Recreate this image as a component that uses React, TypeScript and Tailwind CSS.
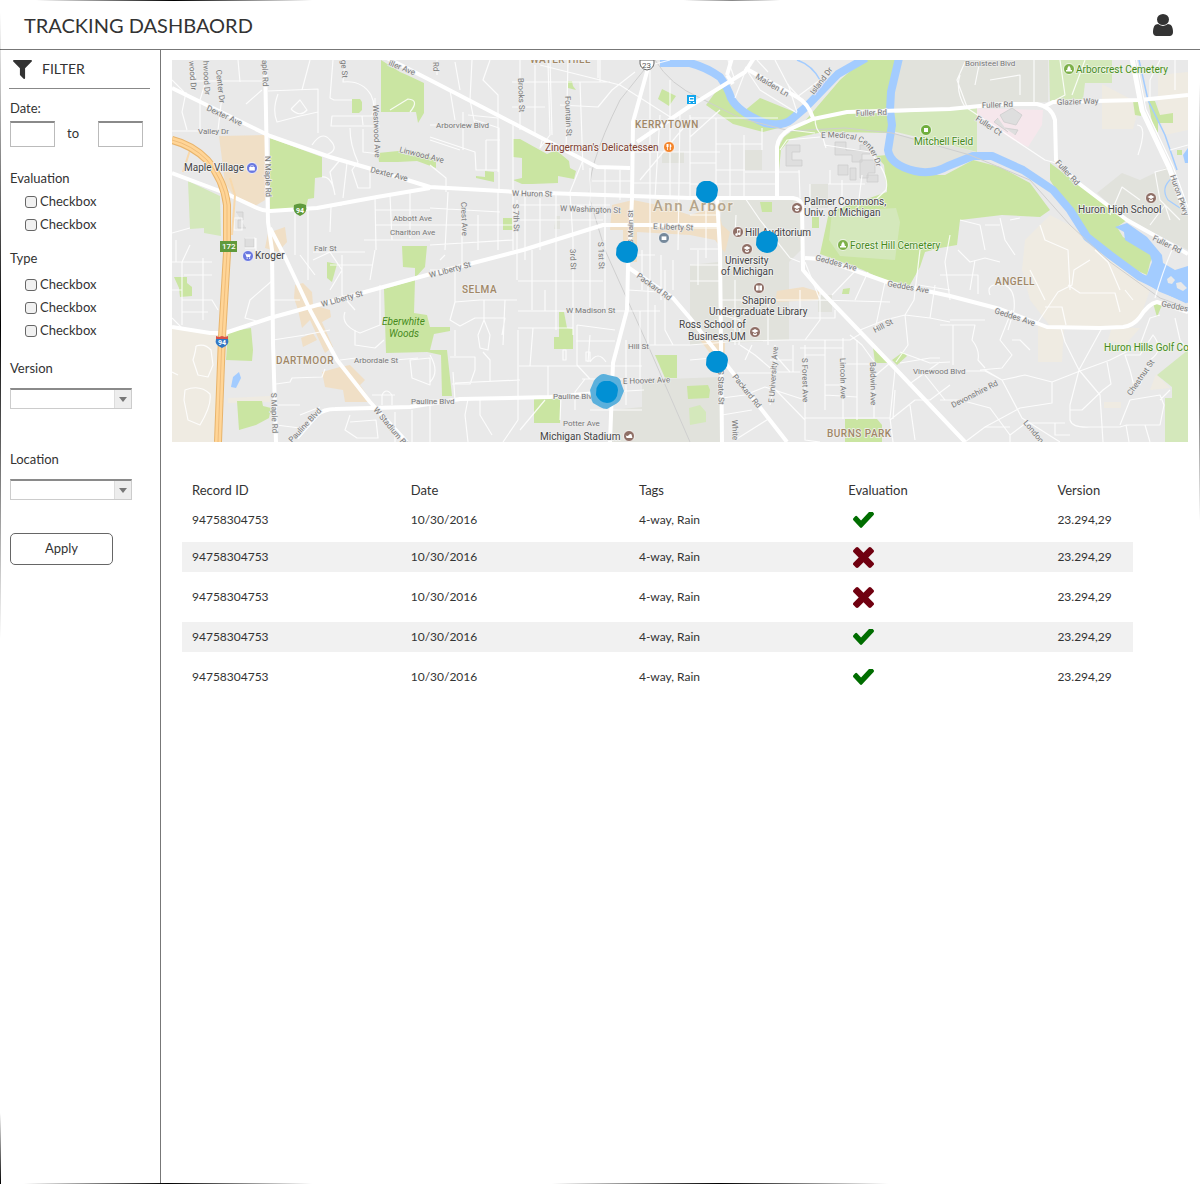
import type { ReactNode } from 'react';

const USER_PATH =
  'M1536 1399q0 109-62.5 187t-150.5 78h-854q-88 0-150.5-78t-62.5-187q0-85 8.5-160.5t31.5-152 58.5-131 94-89 134.5-34.5q131 128 313 128t313-128q76 0 134.5 34.5t94 89 58.5 131 31.5 152 8.5 160.5zm-256-887q0 159-112.5 271.5t-271.5 112.5-271.5-112.5-112.5-271.5 112.5-271.5 271.5-112.5 271.5 112.5 112.5 271.5z';
const FILTER_PATH =
  'M1595 295q17 41-14 70l-493 493v742q0 42-39 59-13 5-25 5-27 0-45-19l-256-256q-19-19-19-45v-486l-493-493q-31-29-14-70 17-39 59-39h1280q42 0 59 39z';
const CHECK_PATH =
  'M1671 566q0 40-28 68l-724 724-136 136q-28 28-68 28t-68-28l-136-136-362-362q-28-28-28-68t28-68l136-136q28-28 68-28t68 28l294 295 656-657q28-28 68-28t68 28l136 136q28 28 28 68z';
const CROSS_PATH =
  'M1490 1322q0 40-28 68l-136 136q-28 28-68 28t-68-28l-294-294-294 294q-28 28-68 28t-68-28l-136-136q-28-28-28-68t28-68l294-294-294-294q-28-28-28-68t28-68l136-136q28-28 68-28t68 28l294 294 294-294q28-28 68-28t68 28l136 136q28 28 28 68t-28 68l-294 294 294 294q28 28 28 68z';

/* ---------- map data ---------- */

const BEIGE = [
  '172,328 220,335 216,442 172,442',
  '1025,240 1050,215 1075,228 1118,262 1150,290 1140,318 1122,327 1050,326 1030,300 1022,270',
  '1102,84 1140,104 1133,129 1102,129',
  '1158,75 1188,72 1188,130 1165,135 1158,110',
  '1038,325 1064,328 1062,362 1038,362',
  '1104,402 1121,402 1121,408 1104,408',
  '1156,374 1170,388 1150,390',
  '228,398 270,396 270,402 228,403',
  '1112,327 1140,328 1125,345 1108,340',
];

const GREY = [
  '722,200 801,200 801,250 789,262 789,340 690,345 690,265 718,262',
  '900,60 1048,60 1048,102 892,111',
  '890,133 950,145 975,152 925,173 893,160',
  '1097,193 1122,173 1140,180 1167,167 1188,213 1188,250 1127,220',
  '642,380 720,377 720,442 612,442 612,410 642,407',
  '745,150 762,150 762,170 745,170',
  '810,184 828,184 828,208 810,208',
  '556,216 560,216 560,229 554,229',
  '662,152 684,152 684,163 662,163',
  '818,295 832,295 832,312 818,312',
];

const GREEN = [
  '270,138 322,157 322,177 315,178 314,198 308,199 306,207 270,210',
  '381,60 400,72 407,75 424,83 424,113 418,123 416,112 381,112',
  '352,99 360,99 362,102 362,110 359,113 352,113',
  '378,153 398,151 417,151 436,160 436,168 417,161 398,162 379,162',
  '402,246 427,246 425,267 415,278 415,268 403,267',
  '384,289 415,280 414,313 427,315 430,327 450,327 450,331 434,334 430,350 447,350 452,396 442,396 441,355 427,352 386,353',
  '174,277 187,277 187,283 192,287 192,296 180,297 179,288',
  '228,332 251,328 253,350 252,361 226,360',
  '237,401 262,401 263,406 271,408 269,418 256,425 239,430',
  '327,262 337,264 332,282 327,278',
  '513,139 520,139 547,154 556,150 569,161 570,168 576,171 574,179 558,176 558,183 532,184 522,184 513,180 522,178 522,158 513,157',
  '485,171 494,172 494,182 476,178 476,176 485,177',
  '503,218 512,218 513,230 503,230',
  '568,81 572,81 573,86 576,90 568,88',
  '662,89 676,96 669,106 658,99',
  '559,312 564,312 567,328 573,329 573,349 554,349 554,337 559,337',
  '534,398 560,398 560,423 534,423',
  '655,355 677,355 677,378 665,378',
  '687,386 708,385 710,390 709,398 688,399',
  '873,347 892,363 875,363',
  '892,360 903,352 907,356 897,365',
  '845,419 877,419 882,425 882,442 845,442',
  '829,212 887,192 884,165 876,156 887,155 893,165 923,175 945,175 973,160 1000,167 1030,183 1050,210 1040,217 1002,215 960,220 957,245 940,248 925,252 920,267 907,290 890,283 863,270 820,254',
  '863,60 898,60 890,115 892,133 836,132 818,133 790,139 781,150 779,170 777,150 784,137 805,121 840,80',
  '706,105 723,82 733,102 743,112 760,98 797,113 790,125 763,132 733,124',
  '760,202 772,202 772,212 762,212',
  '812,217 819,217 819,228 812,228',
  '1148,100 1155,101 1160,115 1173,113 1173,123 1158,123 1158,133 1152,122',
  '1133,101 1140,101 1141,116 1135,115',
  '1050,163 1127,220 1117,227 1123,237 1153,255 1150,263 1147,275 1110,258 1083,233 1050,180',
  '1153,303 1162,305 1157,317',
  '843,289 850,288 849,294 842,294',
  '1177,150 1182,150 1182,155 1177,155',
];

const LIGHT_GREEN = [
  '188,181 220,196 221,236 204,233 204,228 190,229',
  '893,113 977,108 977,152 950,145 892,131',
  '1049,60 1112,60 1112,83 1085,83 1083,100 1050,102',
  '1188,350 1157,375 1172,387 1172,398 1165,398 1165,442 1188,442',
  '832,212 896,208 900,222 895,260 840,256 829,240',
  '689,408 700,405 706,412 706,422 690,425',
];

const TAN = [
  '219,136 265,135 265,200 255,206 235,198 225,183',
  '295,285 303,283 312,292 313,305 330,310 331,317 322,322 333,347 325,353 310,320 302,328 298,310 294,298',
  '301,338 313,333 317,340 303,347',
  '322,372 340,367 350,365 365,380 360,385 372,402 345,402 343,390 325,387',
  '268,233 285,227 287,242 278,252 265,248',
  '612,205 633,200 658,205 690,215 718,207 722,225 730,232 725,253 715,240 690,235 637,232 637,262 623,262 623,230 610,230',
  '777,291 803,287 820,292 818,300 775,302',
  '700,340 725,342 725,358 712,356',
];

const WATER_LINES = [
  'M660 63L690 63Q706 67 720 77Q728 88 731 98Q738 112 765 123Q783 127 792 119L806 107L838 74L866 58',
  'M899 58L891 92L890 110L892 125L888 150Q890 165 915 171Q932 175 948 166L973 156H992L1023 170L1053 190L1070 210L1087 237L1110 255L1140 277L1188 300',
];

const LAKES = [
  '1115,227 1127,223 1147,237 1162,255 1163,263 1175,270 1188,266 1188,303 1160,292 1140,280 1147,275 1152,262 1150,255 1125,240 1124,232',
  '239,372 241,378 236,388 231,387 233,377',
  '1188,148 1183,155 1185,163 1188,163',
];

const MINOR = [
  'M172 131H217M186 92L182 112L187 130M205 84L200 100V130M222 96L218 130M192 60V81H262M238 60L240 82M262 90L246 104M196 81L192 60M172 80L184 92',
  'M268 91L318 89V133M278 94Q272 110 277 122L300 116L318 112M291 109L300 100L307 110Q300 118 291 109M302 90L310 60',
  'M333 60L330 98L334 100H352M345 60L343 82Q362 80 371 95Q376 105 372 116H332L331 126H380M362 116L363 125',
  'M375 98V150M390 110L408 99Q420 100 410 112M350 128Q350 145 358 162L352 170L358 188H370V170M312 145Q322 130 330 140Q340 150 326 155M363 129V152L380 154',
  'M340 160L330 172L335 195M347 163L343 198M322 177Q332 176 335 195M295 211V255M308 209V280M331 207L330 232M317 208L342 205M375 197L376 250M390 195L392 240M410 193V238M375 210H430M375 225H430M364 240H430M313 252H365',
  'M172 233L190 228M176 240V262M190 245L182 262V325M172 262H212M184 275H212M172 290H182M182 300H212L218 310M182 312H208M203 258V320M172 318L182 328M226 230L230 255',
  'M234 218H242V230H234ZM245 238H255V248H245M256 238V252M273 280L250 300L245 318L260 322M273 300H300M273 340L305 335L330 330',
  'M313 260L330 252L342 270L330 290M342 255V295L355 310M300 255L315 275M330 265H372M375 250L370 280M345 312Q340 325 360 333L380 325V285M355 330V345L375 348L384 340',
  'M276 384L290 382L292 378L322 377L325 369M340 360L356 358M410 360L430 358L430 385L412 378ZM395 360L418 358M372 395H395M382 405V395Q386 387 392 395V405M300 415L320 407M350 415L345 430L357 438H378L376 420L350 422M395 412V442M412 410V442M430 405V442',
  'M196 346Q205 343 211 350L213 365L208 377L198 375L193 360Q196 350 196 346M185 390Q200 384 210 394Q212 405 200 425L188 420L184 400ZM172 372L178 375M276 405H300M276 425L300 428',
  'M437 60V75M455 62L460 90M472 60L470 100L475 125M490 60L483 80L498 95V115M450 90L455 120M468 115L498 118V172M463 112V150M475 120L499 128V192M430 125H468M486 140V170M486 140H500M430 137L475 152L476 170H499M430 165L446 178V192M460 150L430 140',
  'M520 60V130M535 65V134M550 60L552 135M568 60L566 150M580 82L583 170M598 60V78M512 82H610M560 105L598 107L612 90L635 72M512 107H545M513 125V250M498 192V250M540 65L620 85L675 120M670 60L640 68M600 60V82',
  'M543 137L540 148L550 135L548 62M583 160L570 192L573 240M590 168V225M605 168V240M620 170V200M592 181H632M632 183H690M650 70V280M660 115L655 198M670 80V198M680 112L678 250M690 115V198M634 152H720M690 137L720 110M640 180L690 120',
  'M430 208L500 212M448 192L445 250M462 215V265M478 215V250M430 225H513M430 245L513 240M445 255L440 260M513 205H610M520 220H603M525 192V260M540 198V250M556 193V330M573 240V312M590 225V313M605 225V312M570 205L610 210',
  'M517 200V280M518 281H603M532 250V310M545 290V311M518 311H660M518 328H573M573 313V335M518 360V345M518 330V420M533 328L530 366M519 366H642M548 366V396M430 270H455V302L480 300L517 300M455 302L450 320L460 326L475 318H505L502 335M484 300V320L478 335L480 348L488 350L490 335L484 320M483 352L490 360V382M430 400H455L453 372M468 399L465 415L468 442M480 399V415L492 435M430 355Q440 372 430 382M450 357H475V370L470 384L452 384M455 383L520 380M503 345L505 300M455 330V356M518 420L503 442M520 430L545 400M560 420L561 396',
  'M577 325V365L590 379M577 325L615 330M590 335L588 362M576 341H615M582 379H642M585 379L575 392V410M590 362Q598 350 606 362M563 350H566V360H563ZM586 352H590V361H586ZM590 410H642M610 392L644 390M648 280V345M640 311V380M655 305V345M642 345H690M626 340V405M628 290L660 292M665 270V330L673 345M630 255H655M661 255V300M642 250V290M673 260V290',
  'M690 118H778M716 118V198M730 143V198M744 135V198M716 144H762M690 163H716M745 172H800M690 184H778M762 128V150M799 170L800 198M716 170H745M690 215H720M690 228H718M706 200V258M736 215L735 235M690 249H720M698 250V285M745 198L760 220L790 258L800 262',
  'M690 265H722M690 281H720M735 280V345M768 300V345M722 300H825M722 315L740 320L739 345M690 345L740 341L787 340H850L862 333M805 262L820 300L890 302M820 292V320L805 340M832 295L858 268M868 272L855 300M800 290V318H835V310M740 345L755 355L775 372L800 372M737 373H772M690 360L712 358M722 398L745 395L765 387L805 400M722 415L752 410M735 440L770 418',
  'M775 345V380L770 405M805 345V440L820 442M793 345V372M825 340V410M843 338V419M857 340V420M874 363V418M805 418H890L895 370M770 384L805 420M800 348H843M825 395L857 397M843 364H874M805 355L825 355M775 355L790 372M890 418L893 442M843 385H825M770 360H792M752 345L745 360',
  'M860 330L885 320L905 315L930 318L950 322M905 315L908 345L896 362M850 335L862 345L875 363M920 250L914 300L905 315M935 285L930 318M918 285L950 290M900 363L930 358H940M908 385L940 362M890 420L915 400H930L950 385M910 405L915 440M890 363L870 380M885 282L875 330M900 352L930 363L950 362M925 375L945 400M950 320H985M895 390L893 419',
  'M945 262L950 300M958 250L970 262L985 258L1000 262M940 275H978V294M975 260L970 290M990 295Q985 282 1005 285Q1016 290 1014 310L1008 330M940 325H975L972 340Q980 350 978 360L985 368M953 325V365M1012 310L1000 340L1012 355L1002 368L980 370M985 370L1002 380L1022 418L1060 442M940 371H985L1002 380L1025 375L1052 382L1080 371L1110 360L1140 345M1052 382V403L1020 408L985 427M1012 340H1020L1030 350',
  'M1061 328L1065 342L1079 370L1100 395L1103 442M1102 328L1079 370L1070 405V420Q1072 428 1090 427H1120Q1125 425 1130 425M1070 410H1082L1103 390L1111 384L1107 362M1129 442L1126 425L1160 425L1164 405L1160 395L1130 400L1120 425M1135 390L1130 370L1125 355L1140 355L1153 335Q1165 350 1150 360L1140 385M940 400H960L990 408L1010 435L1026 423H1065M1010 435V442M1055 423V435H1070M965 442L985 427H1010M1160 400L1170 390M1175 318L1180 340L1188 350M1140 345L1150 318L1160 315M1145 425L1150 442',
  'M1040 225L1045 240L1068 250L1070 290M1038 322L1058 292L1072 285L1074 270L1090 260M1095 250L1108 262L1120 290M1068 285L1080 293H1115L1120 312M1045 307H1062L1066 325M1030 270L1045 300M1155 298Q1165 265 1172 250M1125 290L1133 300',
  'M960 75Q955 90 965 107M965 62L957 80L967 107M980 60L975 85M1034 60V102M990 80L1020 75L1020 95M967 108L1045 160L1056 163M1060 60L1065 95L1052 102M1085 60L1072 95M1137 125Q1148 125 1138 155M1160 60L1150 80V100M1175 60V90M1170 150L1188 145M1110 215L1122 187L1140 200M1150 225L1165 205L1170 220M1170 168L1155 172L1160 200L1180 220',
  'M960 220L980 225L985 250M1000 218L1005 240L1015 255M1010 220L1020 218M950 235L945 262M985 225L1000 225',
  'M775 60L788 85L800 98M748 72L760 90L797 113M728 60L735 80M757 60L768 72M735 98L745 72M788 84L797 112M797 97L820 80M815 118Q815 130 822 135L826 148M824 145L870 152Q890 175 886 190L870 205M862 175L858 207M828 184H865M830 184V170M842 180V208M810 184V208M790 130L815 133M780 150L787 140L820 137',
];

const MAJOR = [
  'M172 88L270 136L330 157L375 170L430 187L517 192L690 198H793Q802 199 802 207L803 270L820 290L890 363L965 442',
  'M265 60L268 222L272 250L273 343L276 442',
  'M172 173L225 193L257 208Q263 211 270 211L317 208L377 197L430 188',
  'M270 228L285 257L310 310L337 360L370 402L407 442',
  'M387 58L430 80L513 123L597 167L630 168',
  'M648 68L633 122L632 198L630 242L628 267L627 310L613 363L610 442',
  'M172 327L210 333H225L270 318L427 275L473 263L523 250L603 225H720',
  'M297 438L317 415Q324 409 335 409L410 407L460 399L550 397L597 393',
  'M629 268L673 298L690 318L733 373L787 442',
  'M717 198L720 250L722 442',
  'M637 142L687 108L745 72L754 58',
  'M727 75L732 58M727 75L733 84',
  'M745 68L797 97Q808 103 813 118',
  'M777 198V147Q778 136 790 129L813 119L847 112L950 109L1000 104H1037Q1052 107 1055 120L1056 160L1077 182L1127 220L1188 254',
  'M1043 107L1053 102L1140 100L1188 95',
  'M805 258L822 259L890 283L950 296L1000 309L1047 327L1100 328L1123 327Q1133 326 1140 317Q1148 304 1157 302L1188 312',
];

const RAIL = [
  'M652 60L620 100Q585 170 590 200L605 250L650 350L690 442',
  'M655 60Q670 85 700 98L740 118L790 131L845 128L892 133L970 155L1030 180L1070 225L1110 262L1160 298L1188 308',
];

const BUILDINGS = [
  'M835 142H846V150H860V145H870V154H862V162H852V155H835ZM838 165H848V175H838ZM860 160H875V173H868V178H860ZM867 175H878V182H867ZM786 145H800V152H792V160H802V166H786ZM850 168H856V180H850Z',
  'M1000 115L1012 108L1022 115L1016 125L1004 122ZM1005 128L1018 130L1015 135M998 118L994 122L1008 132',
  'M236 212H243V220H238V228H246M245 238H254V247H245Z',
];

type MapLabel = { t: string; x: number; y: number; r?: number };

const STREETS: MapLabel[] = [
  { t: 'wood Dr', x: 189, y: 61, r: 86 },
  { t: 'hwood Dr', x: 203, y: 61, r: 87 },
  { t: 'Center Dr', x: 216, y: 70, r: 84 },
  { t: 'Dexter Ave', x: 206, y: 110, r: 25 },
  { t: 'Valley Dr', x: 198, y: 134 },
  { t: 'aple Rd', x: 262, y: 60, r: 88 },
  { t: 'N Maple Rd', x: 265, y: 156, r: 89 },
  { t: 'ge St', x: 341, y: 60, r: 86 },
  { t: 'iller Ave', x: 388, y: 65, r: 22 },
  { t: 'Westwood Ave', x: 373, y: 105, r: 88 },
  { t: 'Linwood Ave', x: 399, y: 152, r: 14 },
  { t: 'Dexter Ave', x: 370, y: 172, r: 14 },
  { t: 'Abbott Ave', x: 393, y: 221 },
  { t: 'Charlton Ave', x: 390, y: 235 },
  { t: 'Fair St', x: 314, y: 251 },
  { t: 'Rd', x: 433, y: 62, r: 88 },
  { t: 'Arborview Blvd', x: 436, y: 128 },
  { t: 'Brooks St', x: 518, y: 78, r: 88 },
  { t: 'Fountain St', x: 565, y: 96, r: 88 },
  { t: 'W Huron St', x: 512, y: 196, r: 1 },
  { t: 'W Washington St', x: 560, y: 211, r: 2 },
  { t: 'Crest Ave', x: 461, y: 202, r: 88 },
  { t: 'S 7th St', x: 513, y: 204, r: 88 },
  { t: 'S Main St', x: 633, y: 244, r: -90 },
  { t: '3rd St', x: 570, y: 249, r: 88 },
  { t: 'S 1st St', x: 598, y: 242, r: 88 },
  { t: 'E Liberty St', x: 653, y: 229, r: 2 },
  { t: 'Maiden Ln', x: 755, y: 78, r: 31 },
  { t: 'Island Dr', x: 814, y: 95, r: -53 },
  { t: 'Fuller Rd', x: 856, y: 116, r: -2 },
  { t: 'Fuller Rd', x: 982, y: 108, r: -2 },
  { t: 'Fuller Ct', x: 975, y: 120, r: 33 },
  { t: 'Glazier Way', x: 1057, y: 105, r: -2 },
  { t: 'Fuller Rd', x: 1055, y: 163, r: 47 },
  { t: 'Fuller Rd', x: 1152, y: 240, r: 26 },
  { t: 'Huron Pkwy', x: 1170, y: 176, r: 71 },
  { t: 'Bonisteel Blvd', x: 965, y: 66 },
  { t: 'W Liberty St', x: 322, y: 307, r: -15 },
  { t: 'W Liberty St', x: 430, y: 278, r: -15 },
  { t: 'S Maple Rd', x: 271, y: 393, r: 88 },
  { t: 'Arbordale St', x: 354, y: 363 },
  { t: 'Pauline Blvd', x: 292, y: 443, r: -47 },
  { t: 'Pauline Blvd', x: 411, y: 404 },
  { t: 'Pauline Blvd', x: 553, y: 399 },
  { t: 'W Stadium Blvd', x: 373, y: 410, r: 50 },
  { t: 'W Madison St', x: 566, y: 313 },
  { t: 'Hill St', x: 628, y: 349 },
  { t: 'E Hoover Ave', x: 623, y: 384, r: -2 },
  { t: 'Potter Ave', x: 563, y: 426 },
  { t: 'Packard Rd', x: 636, y: 277, r: 36 },
  { t: 'Packard Rd', x: 732, y: 377, r: 51 },
  { t: 'S State St', x: 718, y: 370, r: 89 },
  { t: 'White', x: 732, y: 420, r: 88 },
  { t: 'E University Ave', x: 774, y: 403, r: -86 },
  { t: 'S Forest Ave', x: 802, y: 358, r: 89 },
  { t: 'Lincoln Ave', x: 840, y: 358, r: 89 },
  { t: 'Baldwin Ave', x: 870, y: 362, r: 89 },
  { t: 'Hill St', x: 875, y: 333, r: -27 },
  { t: 'Vinewood Blvd', x: 913, y: 374 },
  { t: 'Devonshire Rd', x: 953, y: 408, r: -27 },
  { t: 'Geddes Ave', x: 815, y: 260, r: 15 },
  { t: 'Geddes Ave', x: 887, y: 286, r: 10 },
  { t: 'Geddes Ave', x: 994, y: 313, r: 18 },
  { t: 'Geddes', x: 1161, y: 306, r: 12 },
  { t: 'Chestnut St', x: 1131, y: 396, r: -55 },
  { t: 'London', x: 1023, y: 423, r: 50 },
];

const AREAS: MapLabel[] = [
  { t: 'WATER HILL', x: 530, y: 63 },
  { t: 'KERRYTOWN', x: 635, y: 128 },
  { t: 'DARTMOOR', x: 276, y: 364 },
  { t: 'SELMA', x: 462, y: 293 },
  { t: 'ANGELL', x: 995, y: 285 },
  { t: 'BURNS PARK', x: 827, y: 437 },
];

const PLACES: MapLabel[] = [
  { t: 'Maple Village', x: 184, y: 171 },
  { t: 'Kroger', x: 255, y: 259 },
  { t: 'Palmer Commons,', x: 804, y: 205 },
  { t: 'Univ. of Michigan', x: 804, y: 216 },
  { t: 'Hill Auditorium', x: 745, y: 236 },
  { t: 'University', x: 725, y: 264 },
  { t: 'of Michigan', x: 721, y: 275 },
  { t: 'Shapiro', x: 742, y: 304 },
  { t: 'Undergraduate Library', x: 709, y: 315 },
  { t: 'Ross School of', x: 679, y: 328 },
  { t: 'Business,UM', x: 688, y: 340 },
  { t: 'Michigan Stadium', x: 540, y: 440 },
  { t: 'Huron High School', x: 1078, y: 213 },
];

const PARKS: MapLabel[] = [
  { t: 'Arborcrest Cemetery', x: 1076, y: 73 },
  { t: 'Mitchell Field', x: 914, y: 145 },
  { t: 'Forest Hill Cemetery', x: 850, y: 249 },
  { t: 'Huron Hills Golf Co', x: 1104, y: 351 },
];

const RECORD_PINS = [
  [707, 192],
  [767, 242],
  [627, 252],
  [717, 362],
  [607, 392],
];

function Labels({ items, className }: { items: MapLabel[]; className: string }) {
  return (
    <g className={className}>
      {items.map((l, i) => (
        <text key={i} x={l.x} y={l.y} transform={l.r ? `rotate(${l.r} ${l.x} ${l.y})` : undefined}>
          {l.t}
        </text>
      ))}
    </g>
  );
}

function Shapes({ items, fill }: { items: string[]; fill: string }) {
  return (
    <g fill={fill}>
      {items.map((p) => (
        <polygon key={p} points={p} />
      ))}
    </g>
  );
}

function Poi({ x, y, fill, children }: { x: number; y: number; fill: string; children: ReactNode }) {
  return (
    <g>
      <circle cx={x} cy={y} r="5.5" fill={fill} stroke="#fff" strokeWidth="0.8" />
      <g transform={`translate(${x} ${y})`} fill="#fff" stroke="none">
        {children}
      </g>
    </g>
  );
}

const cap = <path d="M-3.5 -1L0 -3L3.5 -1L0 1ZM-2 1L0 2L2 1V2.5L0 3.4L-2 2.5Z" />;
const tree = <path d="M0 -3.6Q2.2 -1 1.8 1H3V2.6H-3V1H-1.8Q-2.2 -1 0 -3.6Z" />;

function CityMap() {
  return (
    <svg viewBox="172 60 1016 382" className="block w-full" role="img" aria-label="Map of Ann Arbor with record locations">
      <rect x="172" y="60" width="1016" height="382" fill="#e9e9e9" />
      <Shapes items={BEIGE} fill="#efebe2" />
      <Shapes items={GREY} fill="#e1e2dc" />
      <Shapes items={['967,108 1043,110 1042,125 1028,147 1013,140']} fill="#f6e7ec" />
      <Shapes items={GREEN} fill="#cae5a2" />
      <Shapes items={LIGHT_GREEN} fill="#d4e8bb" />
      <Shapes items={TAN} fill="#f0dfc6" />
      <g fill="none" stroke="#a3ccff" strokeWidth="8" strokeLinejoin="round">
        {WATER_LINES.map((d) => (
          <path key={d} d={d} />
        ))}
        <path d="M797 60Q812 65 820 80M1139 60L1148 100L1165 135L1177 170" strokeWidth="1.5" />
        <path d="M1172 178Q1160 188 1168 200L1180 208" strokeWidth="1.2" />
      </g>
      <Shapes items={LAKES} fill="#a3ccff" />
      <g fill="#e9e9e9">
        <path d="M1167 279l4-3 4 4-3 4-4-1zM1176 283l5-1 6 6-4 3-6-3z" />
      </g>
      <g fill="none" stroke="#cfcfcf" strokeWidth="1">
        {RAIL.map((d) => (
          <path key={d} d={d} />
        ))}
      </g>
      <g fill="#dedede" stroke="#cdcdcd" strokeWidth="0.8">
        {BUILDINGS.map((d) => (
          <path key={d} d={d} />
        ))}
      </g>
      <g fill="none" stroke="#fff" strokeOpacity="0.85" strokeWidth="1.2" strokeLinejoin="round">
        {MINOR.map((d) => (
          <path key={d} d={d} />
        ))}
      </g>
      <g fill="none" stroke="#fff" strokeWidth="4" strokeLinejoin="round">
        {MAJOR.map((d) => (
          <path key={d} d={d} />
        ))}
        <path d="M1133 58L1143 110L1170 167L1187 213" strokeWidth="7" />
        <path d="M1135 58L1145 110L1172 167L1189 213" stroke="#e6e6e6" strokeWidth="0.8" />
      </g>
      <path d="M190 150L183 172M230 178L235 195L232 235" fill="none" stroke="#f8d9ad" strokeWidth="2" />
      <g fill="none">
        <path d="M172 140Q192 145 207 160Q224 180 227 205V253L222 337L218 442" stroke="#e8b46c" strokeWidth="8" />
        <path d="M172 140Q192 145 207 160Q224 180 227 205V253L222 337L218 442" stroke="#ffd597" strokeWidth="6" />
        <path d="M172 140Q192 145 207 160Q224 180 227 205V253L222 337L218 442" stroke="#efbd7c" strokeWidth="1" />
      </g>

      <Labels
        items={STREETS}
        className="fill-[#777777] stroke-[#ececec] stroke-[1.5px] font-['Roboto'] text-[8px] [paint-order:stroke]"
      />
      <path id="medical" d="M821 138Q850 136 862 143Q872 150 876 166" fill="none" />
      <text className="fill-[#777777] stroke-[#ececec] stroke-[1.5px] font-['Roboto'] text-[8px] [paint-order:stroke]">
        <textPath href="#medical">E Medical Center Dr</textPath>
      </text>
      <Labels
        items={AREAS}
        className="fill-[#a08766] stroke-[#f0f0f0] stroke-[1.5px] font-['Roboto'] text-[10px] font-medium tracking-wider [paint-order:stroke]"
      />
      <text
        x="653"
        y="211"
        className="fill-[#b4a58c] stroke-[#f4efe6] stroke-[1.5px] font-['Roboto'] text-[15px] font-medium tracking-widest [paint-order:stroke]"
      >
        Ann Arbor
      </text>
      <Labels
        items={PLACES}
        className="fill-[#444444] stroke-[#f2f2f2] stroke-[1.5px] font-['Roboto'] text-[10px] [paint-order:stroke]"
      />
      <Labels
        items={[{ t: "Zingerman's Delicatessen", x: 545, y: 151 }]}
        className="fill-[#7d3b2c] stroke-[#f2f2f2] stroke-[1.5px] font-['Roboto'] text-[10px] [paint-order:stroke]"
      />
      <Labels
        items={PARKS}
        className="fill-[#468a1c] stroke-[#eef5e4] stroke-[1.5px] font-['Roboto'] text-[10px] [paint-order:stroke]"
      />
      <Labels
        items={[
          { t: 'Eberwhite', x: 382, y: 325 },
          { t: 'Woods', x: 389, y: 337 },
        ]}
        className="fill-[#468a1c] font-['Roboto'] text-[10px] italic"
      />

      <Poi x={252} y={168} fill="#6a78e0">
        <path d="M-2.8 -1H2.8V2.6H-2.8ZM-1.5 -1V-2.6H1.5V-1H0.8V-1.9H-0.8V-1Z" />
      </Poi>
      <Poi x={248} y={256} fill="#6a78e0">
        <path d="M-3.3 -2.6H-2L-1.6 -1.8H3L2 1H-1.5L-2.6 -2ZM-1.4 1.6H-0.2V2.8H-1.4ZM1 1.6H2.2V2.8H1Z" />
      </Poi>
      <Poi x={669} y={147} fill="#f3842b">
        <path d="M-2.5 -3H-0.5V0H-1.1V3H-1.9V0H-2.5ZM0.8 -3Q2.4 -3 2.4 0H1.8V3H0.8Z" />
      </Poi>
      <Poi x={664} y={238} fill="#76899b">
        <path d="M-2.4 -1.6H2.4V2H-2.4Z" />
      </Poi>
      <Poi x={797} y={208} fill="#8f6f66">{cap}</Poi>
      <Poi x={747} y={249} fill="#8f6f66">{cap}</Poi>
      <Poi x={755} y={332} fill="#8f6f66">{cap}</Poi>
      <Poi x={1151} y={198} fill="#8f6f66">{cap}</Poi>
      <Poi x={738} y={232} fill="#8f6f66">
        <path d="M-1 -3L2.5 -3.3V1.5A1.3 1.3 0 1 1 1.6 0.6V-1.8L-0.2 -1.6V2.2A1.3 1.3 0 1 1 -1 1.3Z" />
      </Poi>
      <Poi x={759} y={288} fill="#8f6f66">
        <path d="M-3 -2.4H-0.3V2.4H-3ZM0.3 -2.4H3V2.4H0.3Z" />
      </Poi>
      <Poi x={629} y={436} fill="#8f6f66">
        <path d="M-3.4 -1Q-2 1 0 -1Q1 -2.5 2.6 -1.6L3.4 2H-2.4Z" />
      </Poi>
      <Poi x={1069} y={69} fill="#7db04a">{tree}</Poi>
      <Poi x={843} y={245} fill="#7db04a">{tree}</Poi>
      <Poi x={926} y={130} fill="#6fae3c">
        <path d="M-2 -2H2V2H-2Z" />
      </Poi>
      <g>
        <rect x="687" y="95" width="9" height="9" fill="#12a5ec" />
        <path d="M689 97H694V101H689ZM689 102H690.500V103H689ZM693 102H694.500V103H693Z" fill="#fff" />
        <rect x="690" y="98" width="3.500" height="1.500" fill="#12a5ec" />
      </g>
      <path d="M640 60H654Q655 69 647 70Q639 69 640 60Z" fill="#fff" stroke="#666" strokeWidth="1" />
      <text x="642" y="68" className="fill-[#555555] font-['Roboto'] text-[8px]">23</text>
      <rect x="220" y="241" width="17" height="11" fill="#5f9a3c" />
      <text x="222" y="249" className="fill-white font-['Roboto'] text-[8px] font-medium">172</text>
      <path d="M294 205Q300 202 306 205Q308 213 300 216Q292 213 294 205Z" fill="#5f9a3c" />
      <text x="296" y="213" className="fill-white font-['Roboto'] text-[7px] font-bold">94</text>
      <path d="M216 339H228Q230 345 222 348Q214 345 216 339Z" fill="#3177c4" />
      <path d="M216 336L219 337L222 336L225 337L228 336V339H216Z" fill="#d8534a" />
      <text x="218" y="345" className="fill-white font-['Roboto'] text-[7px] font-bold">94</text>

      <path
        d="M600 375Q603 373 608 375L617 377Q621 379 621 383L624 391L621 398Q620 402 614 405L607 409Q603 409 600 407L593 403Q591 400 591 396L590 390L593 383Q594 379 600 375Z"
        fill="#5bb0dc"
      />
      {RECORD_PINS.map(([x, y]) => (
        <path
          key={`${x}-${y}`}
          d="M-3 -11H3Q11 -8 11 -2L10 4Q7 11 0 11Q-8 10 -11 3L-10.500 -4Q-8 -10 -3 -11Z"
          transform={`translate(${x} ${y})`}
          fill="#0190d4"
        />
      ))}
    </svg>
  );
}

/* ---------- sidebar ---------- */

function CheckRow({ id }: { id: string }) {
  return (
    <div className="flex h-[23px] items-center gap-[3px] pl-[15px]">
      <input
        id={id}
        type="checkbox"
        className="size-3 appearance-none rounded-[3px] border border-[#666] bg-[#f1f1f1] checked:bg-[#555]"
      />
      <label htmlFor={id}>Checkbox</label>
    </div>
  );
}

function SelectField({ id, label }: { id: string; label: string }) {
  return (
    <div>
      <label htmlFor={id} className="block leading-5">
        {label}
      </label>
      <div className="relative mt-2.5 w-[122px]">
        <select
          id={id}
          className="block h-[21px] w-full appearance-none border border-t-2 border-[#ccc] border-t-[#8a8a8a] bg-white pr-5"
        />
        <span className="pointer-events-none absolute top-0.5 right-px bottom-px flex w-[17px] items-center justify-center border-l border-[#ddd] bg-[#ededed]">
          <svg viewBox="0 0 8 5" className="h-[5px] w-2" aria-hidden="true">
            <path d="M0 0H8L4 5Z" fill="#777" />
          </svg>
        </span>
      </div>
    </div>
  );
}

const DATE_INPUT = 'h-[26px] w-[45px] border border-[#bbb] border-t-2 border-t-[#8a8a8a] bg-white px-1';

function Sidebar() {
  return (
    <aside className="w-[161px] shrink-0 border-r border-[#777] pr-2.5 pl-[9px]">
      <div className="flex h-[39px] items-center gap-2.5 border-b border-[#888] pl-1">
        <svg viewBox="190 256 1412 1408" className="size-[19px]" aria-hidden="true">
          <path d={FILTER_PATH} fill="#333" />
        </svg>
        <h2 className="text-sm">FILTER</h2>
      </div>
      <form className="pl-px" onSubmit={(e) => e.preventDefault()}>
        <label htmlFor="date-from" className="mt-[9px] block leading-5">
          Date:
        </label>
        <div className="mt-[3px] flex items-center">
          <input id="date-from" type="text" className={DATE_INPUT} />
          <label htmlFor="date-to" className="w-[43px] pr-2 pl-3">
            to
          </label>
          <input id="date-to" type="text" className={DATE_INPUT} />
        </div>
        <fieldset className="mt-[21px]">
          <legend className="mb-0.5 leading-5">Evaluation</legend>
          <CheckRow id="evaluation-1" />
          <CheckRow id="evaluation-2" />
        </fieldset>
        <fieldset className="mt-3">
          <legend className="mb-[5px] leading-5">Type</legend>
          <CheckRow id="type-1" />
          <CheckRow id="type-2" />
          <CheckRow id="type-3" />
        </fieldset>
        <div className="mt-4 flex flex-col gap-10">
          <SelectField id="version" label="Version" />
          <SelectField id="location" label="Location" />
        </div>
        <button type="submit" className="mt-[33px] h-8 w-[103px] rounded-[5px] border border-[#666] bg-white">
          Apply
        </button>
      </form>
    </aside>
  );
}

/* ---------- records ---------- */

const RECORDS = [true, false, false, true, true].map((passed) => ({
  id: '94758304753',
  date: '10/30/2016',
  tags: '4-way, Rain',
  passed,
  version: '23.294,29',
}));

function Verdict({ passed }: { passed: boolean }) {
  return passed ? (
    <svg viewBox="121 434 1550 1088" preserveAspectRatio="none" className="ml-[5px] h-4 w-[21px]" role="img" aria-label="Passed">
      <path d={CHECK_PATH} fill="#006d00" />
    </svg>
  ) : (
    <svg viewBox="302 366 1188 1188" className="ml-[5px] size-[21px]" role="img" aria-label="Failed">
      <path d={CROSS_PATH} fill="#700010" />
    </svg>
  );
}

function RecordsTable() {
  return (
    <div className="pt-[30px] pr-[67px] pl-2.5">
      <table className="w-full table-fixed border-separate border-spacing-x-0 border-spacing-y-2.5 text-left">
        <thead>
          <tr className="h-4 leading-4">
            <th className="w-[23%] pl-2.5 font-normal">Record ID</th>
            <th className="w-[24%] pl-2.5 font-normal">Date</th>
            <th className="w-[22%] pl-2.5 font-normal">Tags</th>
            <th className="w-[22%] pl-2.5 font-normal">Evaluation</th>
            <th className="w-[9%] pl-2.5 font-normal">Version</th>
          </tr>
        </thead>
        <tbody>
          {RECORDS.map((r, i) => (
            <tr key={i} className="h-[30px] text-[12px] first:h-6 even:bg-[#f1f1f1]">
              <td className="pl-2.5">{r.id}</td>
              <td className="pl-2.5">{r.date}</td>
              <td className="pl-2.5">{r.tags}</td>
              <td className="pl-2.5">
                <Verdict passed={r.passed} />
              </td>
              <td className="pl-2.5">{r.version}</td>
            </tr>
          ))}
        </tbody>
      </table>
    </div>
  );
}

export default function App() {
  return (
    <div className="relative flex min-h-screen flex-col bg-white font-['Lato',sans-serif] text-[13px] text-[#333]">
      <header className="flex h-[50px] items-center justify-between border-b border-[#777] pr-[27px] pl-6">
        <h1 className="text-xl">TRACKING DASHBAORD</h1>
        <button type="button" aria-label="Account">
          <svg viewBox="256 128 1280 1536" preserveAspectRatio="none" className="h-[22px] w-5" aria-hidden="true">
            <path d={USER_PATH} fill="#333" />
          </svg>
        </button>
      </header>
      <div className="flex flex-1">
        <Sidebar />
        <main className="min-w-0 flex-1 pt-2.5">
          <div className="pr-3 pl-[11px]">
            <CityMap />
          </div>
          <div className="pl-[11px]">
            <RecordsTable />
          </div>
        </main>
      </div>
      <span className="pointer-events-none absolute top-0 left-[3%] h-px w-[23%] bg-linear-to-r from-transparent via-black to-transparent" />
      <span className="pointer-events-none absolute top-0 left-[57%] h-px w-[8%] bg-linear-to-r from-transparent via-[#888] to-transparent" />
      <span className="pointer-events-none absolute top-[1%] left-0 h-[53%] w-px bg-linear-to-b from-transparent via-black to-transparent" />
      <span className="pointer-events-none absolute top-[94%] left-0 h-[6%] w-px bg-linear-to-b from-transparent to-black" />
      <span className="pointer-events-none absolute top-[7%] right-0 h-[37%] w-px bg-linear-to-b from-transparent via-black to-transparent" />
      <span className="pointer-events-none absolute bottom-0 left-[2%] h-px w-[24%] bg-linear-to-r from-transparent via-black to-transparent" />
      <span className="pointer-events-none absolute bottom-0 left-[46%] h-px w-[28%] bg-linear-to-r from-transparent via-black to-transparent" />
    </div>
  );
}
